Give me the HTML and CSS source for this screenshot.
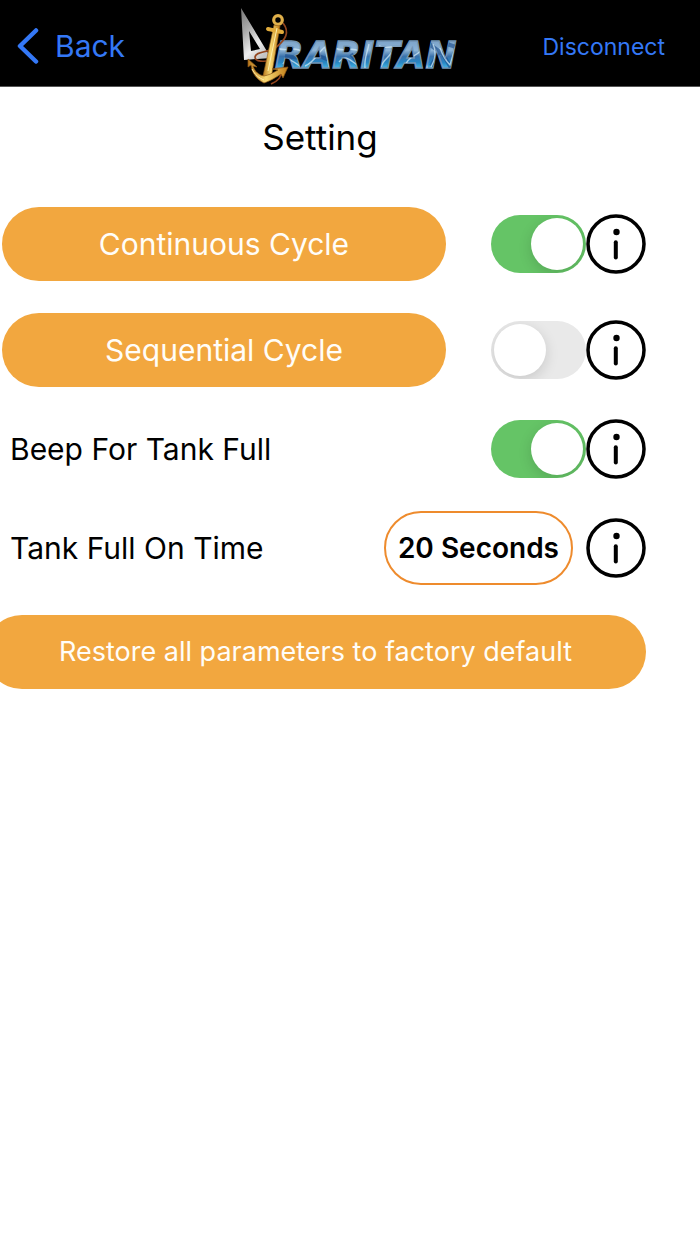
FILE: index.html
```html
<!DOCTYPE html>
<html lang="en">
<head>
<meta charset="utf-8">
<meta name="viewport" content="width=device-width, initial-scale=1">
<title>Setting</title>
<link rel="stylesheet" href="styles.css">
</head>
<body>
<svg class="defs" width="0" height="0" aria-hidden="true">
  <symbol id="info" viewBox="0 0 60 60">
    <circle cx="30" cy="30" r="28" fill="none" stroke="#000" stroke-width="3.5"/>
    <circle cx="30.5" cy="18" r="3.2"/>
    <path d="M29.8 28.2v15.2" fill="none" stroke="#000" stroke-width="4" stroke-linecap="round"/>
  </symbol>
</svg>

<header class="bar">
  <a class="back" href="#">
    <svg class="chevron" viewBox="0 0 22 36" aria-hidden="true"><path d="M19 2.500 3 18l16 15.500" fill="none" stroke="currentColor" stroke-width="4.500" stroke-linecap="round" stroke-linejoin="round"/></svg>
    <span>Back</span>
  </a>
  <svg class="logo" viewBox="0 0 222 80" role="img" aria-label="Raritan">
    <defs>
      <linearGradient id="steel" x1="0" y1="0" x2=".6" y2="1">
        <stop offset="0" stop-color="#777"/><stop offset=".4" stop-color="#acacac"/><stop offset=".75" stop-color="#eee"/><stop offset="1" stop-color="#c4c4c4"/>
      </linearGradient>
      <linearGradient id="gold" x1="0" y1="0" x2="1" y2="0">
        <stop offset="0" stop-color="#b8781c"/><stop offset=".45" stop-color="#f7d873"/><stop offset="1" stop-color="#c17d18"/>
      </linearGradient>
      <linearGradient id="water" x1="0" y1="0" x2="0" y2="1">
        <stop offset=".2" stop-color="#7fa6cb"/><stop offset=".38" stop-color="#8db4d6"/><stop offset=".52" stop-color="#3a72ac"/><stop offset=".66" stop-color="#2786c4"/><stop offset=".8" stop-color="#45b8e6"/>
      </linearGradient>
      <clipPath id="letters"><text class="wordmark" x="36" y="62">RARITAN</text></clipPath>
    </defs>
    <text class="wordmark" x="36" y="62" fill="url(#water)" stroke="#7294b4" stroke-width="1.400">RARITAN</text>
    <g clip-path="url(#letters)" fill="none">
      <path d="M190 38l14 10 8 14M192 60l8-14M208 38l12 4M46 50l14 2M80 50l10 4M112 48l8 10" stroke="#174a88" stroke-width="4" opacity=".6"/>
      <path d="M38 42c8 4 14-1 22 2s8 8 2 9M44 58c4-8 10-3 18 3M66 60c10-4 13-14 20-19l4 20M96 42c10 5 16-2 24 3M100 56c8-9 12 0 20 4M130 38c-2 10-5 14-4 24M140 40c8 4 16-2 24 2M154 43c-2 8-10 10-12 18M166 60c4-12 14-9 18-19l4 21M194 38c4 8 2 16-2 23M201 42c3 8 5 12 10 17l6-20" stroke="#cfe8f6" stroke-width="1.400" opacity=".75"/>
    </g>
    <path d="M2 2 32 52 5 54ZM10 25l2 20 9-2Z" fill="url(#steel)" fill-rule="evenodd"/>
    <path d="M44 17c7 9 3 17-8 25-8 5-19 3-20 9 0 5 9 5 17 3M42 65c1 6-3 10-10 13" fill="none" stroke="#93461f" stroke-width="1.700"/>
    <circle cx="39" cy="14" r="4.300" fill="none" stroke="#e0b04a" stroke-width="3.200"/>
    <path d="m35 19 6 1-9 53-6 3-2-6Z" fill="url(#gold)" stroke="#95601a" stroke-width=".6"/>
    <path d="M29 23c5 1 9 2 14 3" fill="none" stroke="#e2ac3c" stroke-width="4" stroke-linecap="round"/>
    <path d="M9 53l9 8-4-1c2 6 6 9 11 10 5-1 9-3 14-6l-6-1 16-2-5 11-2-4c-6 4-9 6-17 9-8-4-12-10-13-18l-3 2Z" fill="url(#gold)" stroke="#8c5415" stroke-width=".7"/>
    <path d="m38 22-9 43M13 63c3 6 7 9 12 11" fill="none" stroke="#fff0ab" stroke-width="1"/>
  </svg>
  <a class="disconnect" href="#">Disconnect</a>
</header>

<main class="settings">
  <h1 class="title">Setting</h1>

  <div class="row">
    <button class="pill grow" type="button">Continuous Cycle</button>
    <div class="controls">
      <input class="switch" type="checkbox" role="switch" aria-label="Continuous Cycle" checked>
      <button class="info" type="button" aria-label="About Continuous Cycle"><svg viewBox="0 0 60 60"><use href="#info"/></svg></button>
    </div>
  </div>

  <div class="row">
    <button class="pill grow" type="button">Sequential Cycle</button>
    <div class="controls">
      <input class="switch" type="checkbox" role="switch" aria-label="Sequential Cycle">
      <button class="info" type="button" aria-label="About Sequential Cycle"><svg viewBox="0 0 60 60"><use href="#info"/></svg></button>
    </div>
  </div>

  <div class="row">
    <label class="label grow" for="beep">Beep For Tank Full</label>
    <div class="controls">
      <input class="switch" id="beep" type="checkbox" role="switch" checked>
      <button class="info" type="button" aria-label="About Beep For Tank Full"><svg viewBox="0 0 60 60"><use href="#info"/></svg></button>
    </div>
  </div>

  <div class="row">
    <label class="label grow" for="time">Tank Full On Time</label>
    <div class="controls spaced">
      <button class="time" id="time" type="button">20 Seconds</button>
      <button class="info" type="button" aria-label="About Tank Full On Time"><svg viewBox="0 0 60 60"><use href="#info"/></svg></button>
    </div>
  </div>

  <button class="pill restore" type="button">Restore all parameters to factory default</button>
</main>
</body>
</html>
```
FILE: styles.css
```css
* { box-sizing: border-box; }

body {
  margin: 0;
  background: #fff;
  color: #000;
  font-family: Inter, "Liberation Sans", sans-serif;
}

button {
  margin: 0;
  padding: 0;
  border: 0;
  background: none;
  color: inherit;
  font: inherit;
  cursor: pointer;
}

.defs { position: absolute; }

.bar {
  display: grid;
  grid-template-columns: 1fr auto 1fr;
  align-items: center;
  padding: 0 17px;
  height: 87px;
  background: #000;
  border-bottom: 1px solid #555;
}

.bar a { color: #3478f6; text-decoration: none; }

.back {
  display: flex;
  align-items: center;
  gap: 16px;
  padding-top: 6px;
  font-size: 30px;
  line-height: 40px;
}

.chevron { width: 22px; height: 36px; }

.logo { display: block; width: 222px; height: 80px; margin-top: 6px; }

.wordmark {
  font-family: "DejaVu Sans", sans-serif;
  font-size: 37px;
  font-weight: 700;
  font-style: italic;
}

.disconnect {
  justify-self: end;
  margin-right: 18px;
  padding-top: 8px;
  font-size: 23px;
  line-height: 32px;
}

.settings {
  display: flex;
  flex-direction: column;
  gap: 32px;
  padding: 28px 54px 32px 2px;
}

.title {
  margin: 0 8px 16px 0;
  font-size: 35px;
  font-weight: 400;
  line-height: 44px;
  text-align: center;
}

.row {
  display: flex;
  align-items: center;
  gap: 45px;
}

.grow { flex: 1; min-width: 0; }

.pill {
  min-height: 74px;
  border-radius: 37px;
  background: #f2a73f;
  color: #fffdf8;
  font-size: 30px;
  line-height: 40px;
}

.label {
  padding-left: 8px;
  font-size: 30px;
  line-height: 40px;
}

.controls { display: flex; align-items: center; }

.spaced { gap: 13px; }

.row:has(.spaced) { gap: 16px; }

.switch {
  appearance: none;
  display: flex;
  width: 95px;
  height: 58px;
  margin: 0;
  padding: 3px;
  border-radius: 29px;
  background: #e9e9e9;
  cursor: pointer;
  overflow: hidden;
}

.switch::before {
  content: "";
  width: 52px;
  height: 52px;
  border-radius: 50%;
  background: #fff;
  box-shadow: 0 4px 14px rgba(0, 0, 0, .14);
}

.switch:checked {
  justify-content: flex-end;
  background: #65c466;
}

.info { width: 60px; height: 60px; }

.info svg { display: block; width: 100%; height: 100%; }

.time {
  min-height: 74px;
  padding: 0 12px;
  border: 2px solid #ee8b2d;
  border-radius: 37px;
  font-size: 28px;
  font-weight: 600;
  line-height: 36px;
}

.restore {
  margin: -2px 0 0 -17px;
  font-size: 27px;
}
```
